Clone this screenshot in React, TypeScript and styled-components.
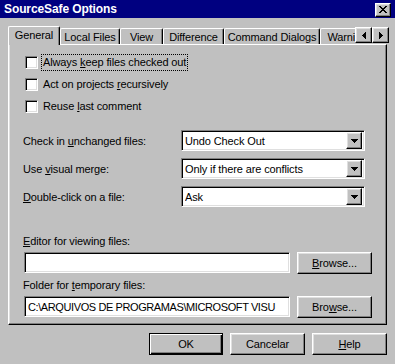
import React from 'react';
import styled, { createGlobalStyle, css } from 'styled-components';

const Global = createGlobalStyle`
  html, body { margin: 0; padding: 0; background: #c0c0c0; }
  body {
    font-family: "Liberation Sans", Arial, sans-serif;
    font-size: 11px;
    letter-spacing: -0.12px;
    color: #000;
  }
  * { box-sizing: border-box; }
`;

const raised = css`
  border-top: 1px solid #fff;
  border-left: 1px solid #fff;
  border-right: 1px solid #000;
  border-bottom: 1px solid #000;
  box-shadow: inset -1px -1px 0 #808080, inset 1px 1px 0 #dfdfdf;
  background: #c0c0c0;
`;

const sunken = css`
  border-top: 1px solid #808080;
  border-left: 1px solid #808080;
  border-right: 1px solid #fff;
  border-bottom: 1px solid #fff;
  box-shadow: inset 1px 1px 0 #000, inset -1px -1px 0 #dfdfdf;
  background: #fff;
`;

const Window = styled.div`
  width: 395px;
  height: 364px;
  background: #c0c0c0;
  display: flex;
  flex-direction: column;
  overflow: hidden;
`;

const TitleBar = styled.div`
  height: 18px;
  background: #000080;
  display: flex;
  align-items: center;
  justify-content: space-between;
  padding: 0 4px 0 4px;
`;

const Title = styled.span`
  color: #fff;
  font-weight: bold;
  font-size: 12px;
  letter-spacing: -0.1px;
`;

const CloseButton = styled.div`
  ${raised};
  width: 16px;
  height: 14px;
  display: flex;
  align-items: center;
  justify-content: center;
  margin-top: 1px;
`;

const TabArea = styled.div`
  margin-top: 8px;
  padding: 0 8px;
  display: flex;
  flex-direction: column;
`;

const TabStrip = styled.div`
  position: relative;
  height: 18px;
  display: flex;
  align-items: flex-start;
`;

const TabClip = styled.div`
  width: 347px;
  height: 19px;
  overflow: hidden;
  display: flex;
  align-items: flex-start;
  position: relative;
  z-index: 2;
`;

const Tab = styled.div<{ $active?: boolean; $w: number }>`
  flex: none;
  width: ${p => p.$w}px;
  height: ${p => (p.$active ? 19 : 16)}px;
  margin-top: ${p => (p.$active ? 0 : 2)}px;
  background: #c0c0c0;
  border-top: 1px solid #fff;
  border-left: 1px solid #fff;
  border-right: 1px solid #000;
  border-top-left-radius: 2px;
  border-top-right-radius: 2px;
  box-shadow: inset -1px 0 0 #808080;
  display: flex;
  align-items: center;
  justify-content: center;
  padding-bottom: ${p => (p.$active ? 2 : 0)}px;
  white-space: nowrap;
`;

const ScrollButtons = styled.div`
  position: absolute;
  left: 347px;
  top: 1px;
  display: flex;
  z-index: 3;
`;

const ScrollButton = styled.div`
  ${raised};
  width: 17px;
  height: 16px;
  display: flex;
  align-items: center;
  justify-content: center;
`;

const Panel = styled.div`
  height: 281px;
  border-top: 1px solid #fff;
  border-left: 1px solid #fff;
  border-right: 1px solid #000;
  border-bottom: 1px solid #000;
  box-shadow: inset -1px -1px 0 #808080, inset 1px 0 0 #dfdfdf;
  padding: 11px 0 0 14px;
  display: flex;
  flex-direction: column;
`;

const CheckGroup = styled.div`
  display: flex;
  flex-direction: column;
  gap: 9px;
  padding-left: 2px;
`;

const CheckRow = styled.div`
  display: flex;
  align-items: center;
  height: 13px;
  gap: 4px;
`;

const CheckBox = styled.div`
  ${sunken};
  width: 13px;
  height: 13px;
  flex: none;
`;

const CheckLabel = styled.span<{ $focus?: boolean }>`
  padding: 1px 1px;
  outline: ${p => (p.$focus ? '1px dotted #000' : 'none')};
  line-height: 13px;
  white-space: nowrap;
`;

const FieldGrid = styled.div`
  margin-top: 17px;
  display: grid;
  grid-template-columns: 158px 184px;
  row-gap: 7px;
  align-items: center;
`;

const FieldLabel = styled.span`
  white-space: nowrap;
`;

const Select = styled.div`
  ${sunken};
  height: 21px;
  display: flex;
  align-items: center;
  padding: 2px 2px 2px 3px;
`;

const SelectText = styled.span`
  flex: 1;
  white-space: nowrap;
  overflow: hidden;
`;

const DropButton = styled.div`
  ${raised};
  width: 16px;
  height: 17px;
  flex: none;
  display: flex;
  align-items: center;
  justify-content: center;
`;

const BlockLabel = styled.div<{ $top: number }>`
  margin-top: ${p => p.$top}px;
  line-height: 13px;
  white-space: nowrap;
`;

const InputRow = styled.div`
  margin-top: 4px;
  display: grid;
  grid-template-columns: 266px 75px;
  column-gap: 7px;
  padding-left: 1px;
`;

const TextInput = styled.div`
  ${sunken};
  height: 21px;
  display: flex;
  align-items: center;
  padding: 0 3px;
  white-space: nowrap;
  overflow: hidden;
  letter-spacing: -0.4px;
`;

const Button = styled.div<{ $default?: boolean }>`
  width: ${p => (p.$default ? 74 : 75)}px;
  height: 22px;
  display: flex;
  align-items: center;
  justify-content: center;
  background: #c0c0c0;
  ${p =>
    p.$default
      ? css`
          border: 1px solid #000;
          box-shadow: inset 1px 1px 0 #fff, inset -1px -1px 0 #000, inset -2px -2px 0 #808080;
        `
      : css`
          border-top: 1px solid #fff;
          border-left: 1px solid #fff;
          border-right: 1px solid #000;
          border-bottom: 1px solid #000;
          box-shadow: inset -1px -1px 0 #808080, inset 1px 1px 0 #dfdfdf;
        `}
`;

const Footer = styled.div`
  margin-top: 8px;
  padding-right: 8px;
  display: flex;
  justify-content: flex-end;
  gap: 7px;
`;

const DownArrow = () => (
  <svg width="7" height="4" viewBox="0 0 7 4" shapeRendering="crispEdges">
    <path d="M0 0h7v1H0zM1 1h5v1H1zM2 2h3v1H2zM3 3h1v1H3z" fill="#000" />
  </svg>
);

const LeftArrow = () => (
  <svg width="4" height="7" viewBox="0 0 4 7" shapeRendering="crispEdges">
    <path d="M3 0h1v7H3zM2 1h1v5H2zM1 2h1v3H1zM0 3h1v1H0z" fill="#000" />
  </svg>
);

const RightArrow = () => (
  <svg width="4" height="7" viewBox="0 0 4 7" shapeRendering="crispEdges">
    <path d="M0 0h1v7H0zM1 1h1v5H1zM2 2h1v3H2zM3 3h1v1H3z" fill="#000" />
  </svg>
);

const CloseGlyph = () => (
  <svg width="8" height="7" viewBox="0 0 8 7" shapeRendering="crispEdges">
    <path
      d="M0 0h2v1H0zM6 0h2v1H6zM1 1h2v1H1zM5 1h2v1H5zM2 2h4v1H2zM3 3h2v1H3zM2 4h4v1H2zM1 5h2v1H1zM5 5h2v1H5zM0 6h2v1H0zM6 6h2v1H6z"
      fill="#000"
    />
  </svg>
);

const tabs = [
  { label: 'General', w: 52, active: true },
  { label: 'Local Files', w: 60 },
  { label: 'View', w: 43 },
  { label: 'Difference', w: 61 },
  { label: 'Command Dialogs', w: 96 },
  { label: 'Warnings', w: 60 },
];

export default function App() {
  return (
    <>
      <Global />
      <Window>
        <TitleBar>
          <Title>SourceSafe Options</Title>
          <CloseButton>
            <CloseGlyph />
          </CloseButton>
        </TitleBar>
        <TabArea>
          <TabStrip>
            <TabClip>
              {tabs.map(t => (
                <Tab key={t.label} $active={t.active} $w={t.w}>
                  {t.label}
                </Tab>
              ))}
            </TabClip>
            <ScrollButtons>
              <ScrollButton>
                <LeftArrow />
              </ScrollButton>
              <ScrollButton>
                <RightArrow />
              </ScrollButton>
            </ScrollButtons>
          </TabStrip>
          <Panel>
            <CheckGroup>
              <CheckRow>
                <CheckBox />
                <CheckLabel $focus>
                  Always <u>k</u>eep files checked out
                </CheckLabel>
              </CheckRow>
              <CheckRow>
                <CheckBox />
                <CheckLabel>
                  Act on projects <u>r</u>ecursively
                </CheckLabel>
              </CheckRow>
              <CheckRow>
                <CheckBox />
                <CheckLabel>
                  Reuse <u>l</u>ast comment
                </CheckLabel>
              </CheckRow>
            </CheckGroup>
            <FieldGrid>
              <FieldLabel>
                Check in <u>u</u>nchanged files:
              </FieldLabel>
              <Select>
                <SelectText>Undo Check Out</SelectText>
                <DropButton>
                  <DownArrow />
                </DropButton>
              </Select>
              <FieldLabel>
                Use <u>v</u>isual merge:
              </FieldLabel>
              <Select>
                <SelectText>Only if there are conflicts</SelectText>
                <DropButton>
                  <DownArrow />
                </DropButton>
              </Select>
              <FieldLabel>
                <u>D</u>ouble-click on a file:
              </FieldLabel>
              <Select>
                <SelectText>Ask</SelectText>
                <DropButton>
                  <DownArrow />
                </DropButton>
              </Select>
            </FieldGrid>
            <BlockLabel $top={28}>
              <u>E</u>ditor for viewing files:
            </BlockLabel>
            <InputRow>
              <TextInput />
              <Button>
                <span>
                  <u>B</u>rowse...
                </span>
              </Button>
            </InputRow>
            <BlockLabel $top={5}>
              Folder for <u>t</u>emporary files:
            </BlockLabel>
            <InputRow>
              <TextInput>C:\ARQUIVOS DE PROGRAMAS\MICROSOFT VISU</TextInput>
              <Button>
                <span>
                  Bro<u>w</u>se...
                </span>
              </Button>
            </InputRow>
          </Panel>
        </TabArea>
        <Footer>
          <Button $default>OK</Button>
          <Button>Cancelar</Button>
          <Button>
            <span>
              <u>H</u>elp
            </span>
          </Button>
        </Footer>
      </Window>
    </>
  );
}
